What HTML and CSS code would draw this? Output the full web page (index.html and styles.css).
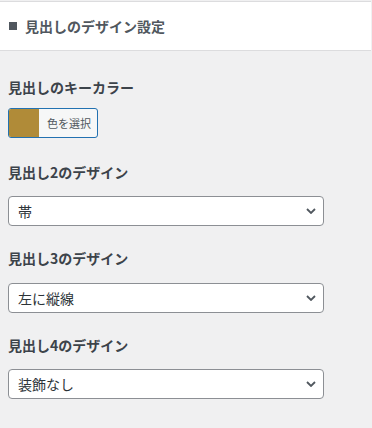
FILE: index.html
```html
<!DOCTYPE html>
<html lang="ja">
<head>
<meta charset="utf-8">
<link rel="stylesheet" href="styles.css">
</head>
<body>
<div class="header"><span class="sq"></span><span class="title">見出しのデザイン設定</span></div>
<div class="content">
  <div class="group group-color">
    <div class="label">見出しのキーカラー</div>
    <button class="color-btn"><span class="swatch"></span><span class="btn-text">色を選択</span></button>
  </div>
  <div class="group">
    <div class="label">見出し2のデザイン</div>
    <div class="select-wrap">
      <select class="select"><option>帯</option></select>
      <svg class="chev" width="10" height="6" viewBox="0 0 10 6"><path d="M1 1 L5 5 L9 1" fill="none" stroke="#50575e" stroke-width="1.8"/></svg>
    </div>
  </div>
  <div class="group">
    <div class="label">見出し3のデザイン</div>
    <div class="select-wrap">
      <select class="select"><option>左に縦線</option></select>
      <svg class="chev" width="10" height="6" viewBox="0 0 10 6"><path d="M1 1 L5 5 L9 1" fill="none" stroke="#50575e" stroke-width="1.8"/></svg>
    </div>
  </div>
  <div class="group">
    <div class="label">見出し4のデザイン</div>
    <div class="select-wrap">
      <select class="select"><option>装飾なし</option></select>
      <svg class="chev" width="10" height="6" viewBox="0 0 10 6"><path d="M1 1 L5 5 L9 1" fill="none" stroke="#50575e" stroke-width="1.8"/></svg>
    </div>
  </div>
</div>
</body>
</html>
```
FILE: styles.css
```css
html, body {
  margin: 0;
  padding: 0;
  background: #f0f0f1;
  font-family: "Noto Sans", "Noto Sans CJK JP", sans-serif;
}
.header {
  margin-top: 1px;
  margin-right: 1px;
  height: 48px;
  background: #fff;
  border-top: 1px solid #dcdcde;
  border-bottom: 1px solid #dcdcde;
  display: flex;
  align-items: center;
  padding-left: 9px;
  gap: 8px;
  box-sizing: content-box;
}
.sq {
  width: 8px;
  height: 8px;
  background: #50575e;
}
.title {
  font-family: "Noto Sans CJK JP", sans-serif;
  font-size: 14px;
  font-weight: 700;
  color: #50575e;
  line-height: 20px;
}
.content {
  padding: 24px 8px 0 8px;
}
.group {
  margin-bottom: 20px;
}
.group-color {
  margin-bottom: 21.5px;
}
.label {
  font-family: "Noto Sans CJK JP", sans-serif;
  font-size: 14px;
  font-weight: 700;
  line-height: 24.5px;
  color: #3c434a;
  margin-bottom: 12px;
}
.group-color .label {
  margin-bottom: 8.5px;
}
.color-btn {
  display: flex;
  align-items: stretch;
  height: 30px;
  width: 90px;
  padding: 0;
  margin: 0;
  border: 1px solid #2271b1;
  border-radius: 3px;
  background: #f6f7f7;
  overflow: hidden;
  box-sizing: border-box;
  cursor: pointer;
}
.swatch {
  width: 30px;
  background: #b08b38;
}
.btn-text {
  display: flex;
  align-items: center;
  padding-left: 8px;
  font-family: "Noto Sans CJK JP", sans-serif;
  font-size: 11px;
  color: #50575e;
}
.select-wrap {
  position: relative;
  width: 316px;
}
.select {
  display: block;
  width: 316px;
  height: 30px;
  margin: 0;
  padding: 0 24px 0 9px;
  border: 1px solid #8c8f94;
  border-radius: 4px;
  background: #fff;
  box-sizing: border-box;
  appearance: none;
  -webkit-appearance: none;
  font-family: "Noto Sans CJK JP", sans-serif;
  font-size: 14px;
  color: #2c3338;
}
.chev {
  position: absolute;
  right: 8px;
  top: 12px;
  pointer-events: none;
}
```
